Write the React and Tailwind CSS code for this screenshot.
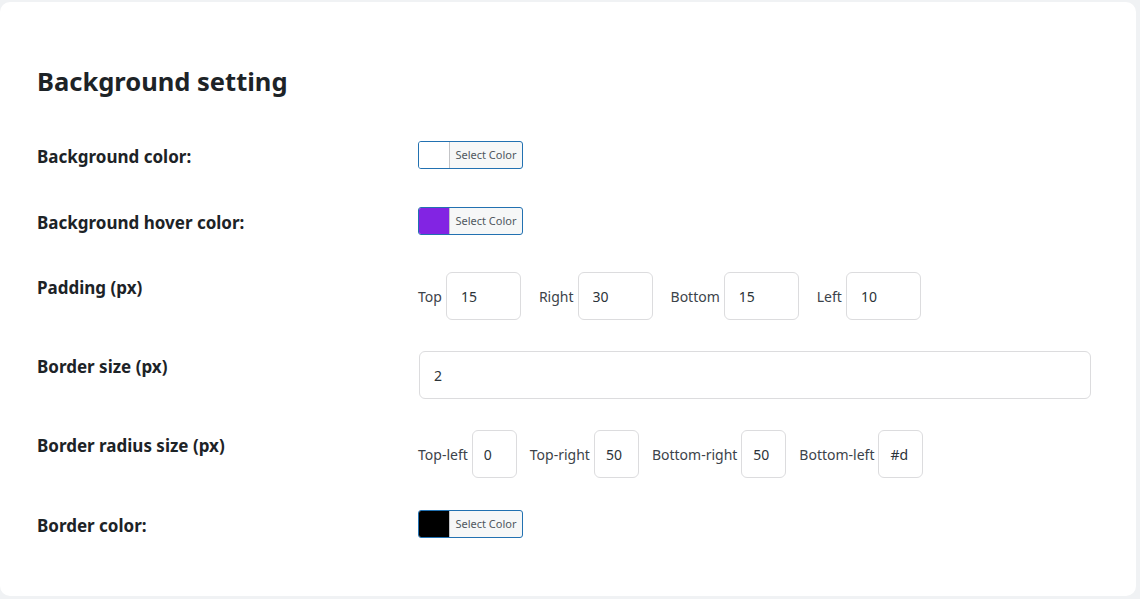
import React from 'react';

const font = { fontFamily: '"Noto Sans", "Open Sans", sans-serif' };

const ColorButton = ({ swatch }) => (
    <button
        type="button"
        className="flex h-[28px] w-[105px] overflow-hidden rounded-[3px] border border-[#2271b1] bg-[#f6f7f7] p-0"
    >
        <span className={`h-full w-[31px] border-r border-[#c3c4c7] ${swatch}`} />
        <span className="flex flex-1 items-center justify-center text-[11px] text-[#50575e]">
            Select Color
        </span>
    </button>
);

const Field = ({ value, width, pad = 'px-[14px]' }) => (
    <input
        readOnly
        value={value}
        className={`h-[48px] ${width} ${pad} rounded-[6px] border border-[#dcdcde] bg-white text-[14px] text-[#2c3338] outline-none`}
    />
);

const Row = ({ label, children, className }) => (
    <div className={`flex items-start ${className}`}>
        <div className="w-[381px] pt-[20px] text-[17px] leading-[21px] font-bold text-[#1d2327]">
            {label}
        </div>
        <div className="pt-[15px]">{children}</div>
    </div>
);

const App = () => {
    const padding = [
        ['Top', '15'],
        ['Right', '30'],
        ['Bottom', '15'],
        ['Left', '10'],
    ];
    const radius = [
        ['Top-left', '0'],
        ['Top-right', '50'],
        ['Bottom-right', '50'],
        ['Bottom-left', '#d'],
    ];

    return (
        <div className="min-h-screen w-full bg-[#f0f2f4] pt-[2px]" style={font}>
            <div className="h-[594px] w-[1136px] rounded-[10px] bg-white pl-[37px]">
                <h2 className="pt-[62px] text-[25.5px] leading-[34px] font-bold text-[#1d2327]">
                    Background setting
                </h2>
                <div className="mt-[28px]">
                    <Row label="Background color:" className="h-[66px]">
                        <ColorButton swatch="bg-white" />
                    </Row>
                    <Row label="Background hover color:" className="h-[65px]">
                        <ColorButton swatch="bg-[#8224e3]" />
                    </Row>
                    <Row label="Padding (px)" className="h-[79px]">
                        <div className="flex items-center gap-[18px]">
                            {padding.map(([name, val]) => (
                                <div key={name} className="flex items-center gap-[4px]">
                                    <span className="text-[14px] text-[#3c434a]">{name}</span>
                                    <Field value={val} width="w-[75px]" />
                                </div>
                            ))}
                        </div>
                    </Row>
                    <Row label="Border size (px)" className="h-[79px]">
                        <div className="pl-px">
                            <Field value="2" width="w-[672px]" />
                        </div>
                    </Row>
                    <Row label="Border radius size (px)" className="h-[80px]">
                        <div className="flex items-center gap-[13px]">
                            {radius.map(([name, val]) => (
                                <div key={name} className="flex items-center gap-[4px]">
                                    <span className="text-[14px] text-[#3c434a]">{name}</span>
                                    <Field value={val} width="w-[45px]" pad="px-[11px]" />
                                </div>
                            ))}
                        </div>
                    </Row>
                    <Row label="Border color:" className="h-[66px]">
                        <ColorButton swatch="bg-black" />
                    </Row>
                </div>
            </div>
        </div>
    );
};

export default App;
